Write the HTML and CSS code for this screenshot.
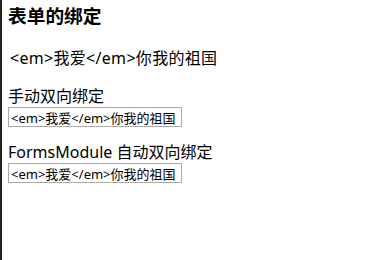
FILE: index.html
```html
<!DOCTYPE html>
<html>
<head>
<meta charset="utf-8">
<link rel="stylesheet" href="styles.css">
</head>
<body>
<div class="page">
  <h3 class="title">表单的绑定</h3>
  <p class="raw">&lt;em&gt;我爱&lt;/em&gt;你我的祖国</p>
  <div class="group">
    <div class="label">手动双向绑定</div>
    <input class="field" type="text" value="<em>我爱</em>你我的祖国">
  </div>
  <div class="group">
    <div class="label">FormsModule 自动双向绑定</div>
    <input class="field" type="text" value="<em>我爱</em>你我的祖国">
  </div>
</div>
</body>
</html>
```
FILE: styles.css
```css
html, body {
  margin: 0;
  padding: 0;
  background: #fff;
}
body {
  border-left: 2px solid #222;
  min-height: 260px;
  box-sizing: border-box;
  font-family: "Noto Sans", "Noto Sans CJK SC", sans-serif;
  color: #000;
}
.page {
  padding: 4px 0 0 6px;
}
.title {
  font-size: 18.72px;
  font-weight: bold;
  margin: 0 0 19px;
  line-height: 24px;
}
.raw {
  font-size: 16px;
  line-height: 22px;
  margin: 0 0 16px;
  padding-left: 2px;
  letter-spacing: 0.3px;
}
.group {
  margin-bottom: 14px;
}
.label {
  font-size: 16px;
  line-height: 22px;
}
.field {
  display: block;
  width: 174px;
  height: 20px;
  box-sizing: border-box;
  border: 1px solid #a9a9a9;
  padding: 0 2px;
  margin: 0;
  font-family: "Noto Sans", "Noto Sans CJK SC", sans-serif;
  font-size: 13px;
  color: #000;
}
```
